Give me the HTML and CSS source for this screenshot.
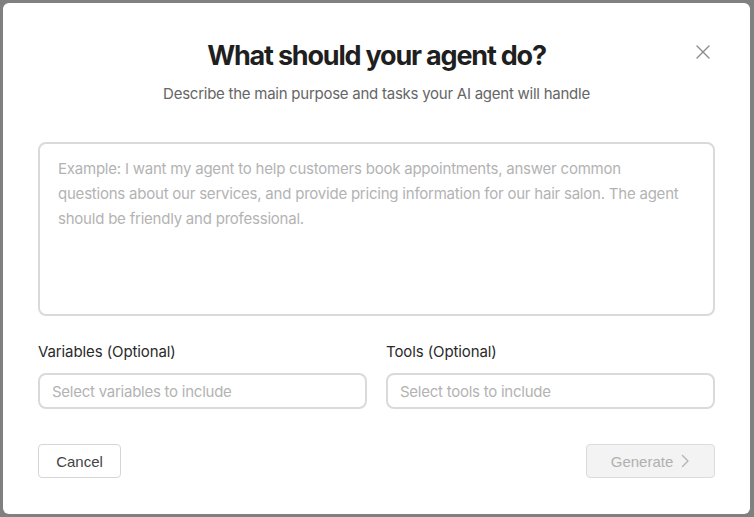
FILE: index.html
```html
<!DOCTYPE html>
<html lang="en">
<head>
<meta charset="utf-8">
<title>What should your agent do?</title>
<link rel="stylesheet" href="styles.css">
</head>
<body>
<div class="dialog">
  <button class="close" aria-label="Close">
    <svg width="14" height="14" viewBox="0 0 14 14"><path d="M1 1L13 13M13 1L1 13" stroke="#8a8a8a" stroke-width="1.4" stroke-linecap="round" fill="none"/></svg>
  </button>
  <header class="head">
    <h1 class="title">What should your agent do?</h1>
    <p class="subtitle">Describe the main purpose and tasks your AI agent will handle</p>
  </header>
  <div class="prompt">Example: I want my agent to help customers book appointments, answer common questions about our services, and provide pricing information for our hair salon. The agent should be friendly and professional.</div>
  <div class="fields">
    <div class="field">
      <label class="label">Variables (Optional)</label>
      <div class="select">Select variables to include</div>
    </div>
    <div class="field">
      <label class="label">Tools (Optional)</label>
      <div class="select">Select tools to include</div>
    </div>
  </div>
  <div class="actions">
    <button class="btn cancel">Cancel</button>
    <button class="btn generate">Generate <span class="chev"><svg width="9" height="14" viewBox="0 0 9 14"><path d="M1.5 1.5L7 7L1.5 12.5" stroke="#b5b5b5" stroke-width="1.4" fill="none" stroke-linecap="round" stroke-linejoin="round"/></svg></span></button>
  </div>
</div>
</body>
</html>
```

FILE: styles.css
```css
html, body {
  margin: 0;
  padding: 0;
}
body {
  background: #808080;
  width: 754px;
  height: 517px;
  overflow: hidden;
  font-family: Inter, "Noto Sans", sans-serif;
}
.dialog {
  position: relative;
  box-sizing: border-box;
  margin: 3px 0 0 3px;
  width: 747px;
  height: 511px;
  background: #fff;
  border-radius: 6px;
  padding: 36px 35px 36px 35px;
  display: flex;
  flex-direction: column;
}
.close {
  position: absolute;
  top: 39px;
  left: 690px;
  width: 20px;
  height: 20px;
  padding: 3px;
  border: 0;
  background: none;
  display: flex;
  align-items: center;
  justify-content: center;
}
.head {
  text-align: center;
}
.title {
  margin: 0;
  font-size: 27px;
  line-height: 34px;
  font-weight: 700;
  color: #1f1f1f;
  letter-spacing: -1.2px;
}
.subtitle {
  margin: 11px 0 0;
  font-size: 15px;
  line-height: 20px;
  color: #666;
  letter-spacing: -0.25px;
}
.prompt {
  margin-top: 38px;
  box-sizing: border-box;
  height: 174px;
  border: 2px solid #dadada;
  border-radius: 8px;
  padding: 12px 22px 12px 18px;
  font-size: 15px;
  line-height: 25px;
  color: #b3b3b3;
  letter-spacing: -0.22px;
}
.fields {
  margin-top: 26px;
  display: grid;
  grid-template-columns: 1fr 1fr;
  gap: 19px;
}
.field {
  display: flex;
  flex-direction: column;
  gap: 11px;
}
.label {
  font-size: 15px;
  line-height: 20px;
  color: #2a2a2a;
  letter-spacing: -0.1px;
}
.select {
  box-sizing: border-box;
  height: 36px;
  border: 2px solid #dadada;
  border-radius: 8px;
  padding: 0 12px;
  display: flex;
  align-items: center;
  font-size: 15px;
  color: #b3b3b3;
  letter-spacing: -0.25px;
}
.actions {
  margin-top: 35px;
  display: flex;
  justify-content: space-between;
}
.btn {
  box-sizing: border-box;
  height: 34px;
  border-radius: 4px;
  font-family: "Liberation Sans", Arial, sans-serif;
  font-size: 15px;
  display: flex;
  align-items: center;
  justify-content: center;
  gap: 8px;
}
.cancel {
  width: 83px;
  border: 1px solid #d6d6d6;
  background: #fff;
  color: #444;
}
.generate {
  width: 129px;
  border: 1px solid #dcdcdc;
  background: #f3f3f3;
  color: #b0b0b0;
}
.chev {
  display: flex;
}
```
